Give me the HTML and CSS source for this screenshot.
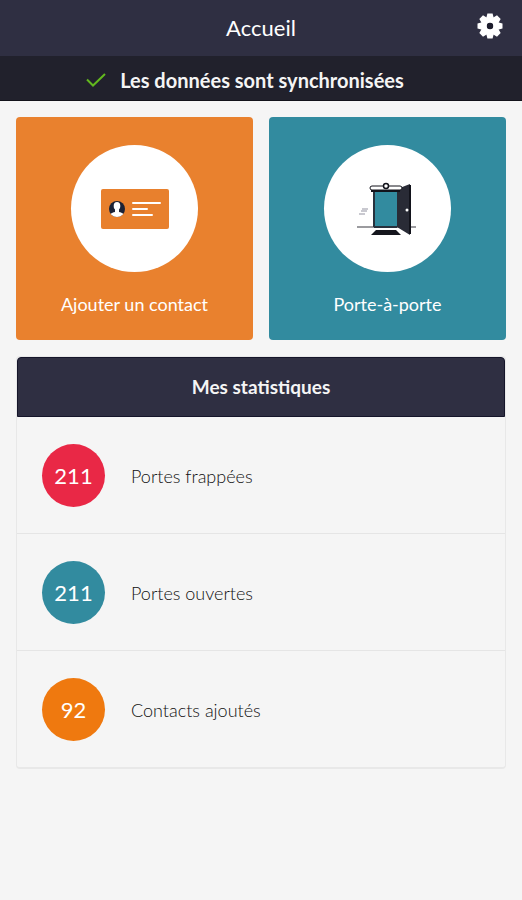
FILE: index.html
```html
<!DOCTYPE html>
<html lang="fr">
<head>
  <meta charset="UTF-8">
  <meta name="viewport" content="width=device-width, initial-scale=1.0">
  <title>Accueil</title>
  <link rel="stylesheet" href="styles.css">
</head>
<body>
  <header class="topbar">
    <h1>Accueil</h1>
    <button class="settings" type="button" aria-label="Paramètres">
      <svg width="26" height="26" viewBox="-13 -13 26 26">
        <g fill="#fff">
          <path id="teeth" d="M-2.6-12.5h5.200L4-7h-8zM-2.6 12.5h5.200L4 7h-8zM-12.5-2.6v5.200L-7 4v-8zM12.5-2.6v5.200L7 4v-8z" />
          <use href="#teeth" transform="rotate(45)" />
        </g>
        <circle r="6" fill="none" stroke="#fff" stroke-width="6" />
        <circle r="3.2" fill="#1c1c2c" />
      </svg>
    </button>
  </header>

  <div class="sync" role="status">
    <svg width="20" height="14" viewBox="0 0 20 14">
      <path d="M1 6.5l6 6L19 1" fill="none" stroke="#62b81e" stroke-width="2" />
    </svg>
    <span>Les données sont synchronisées</span>
  </div>

  <main>
    <nav class="actions">
      <a class="action orange" href="#contact">
        <span class="disc">
          <svg width="68" height="40" viewBox="0 0 68 40">
            <rect width="68" height="40" rx="2" fill="#e8802d" />
            <clipPath id="face"><circle cx="16" cy="20" r="8" /></clipPath>
            <circle cx="16" cy="20" r="8" fill="#1c2235" />
            <g clip-path="url(#face)" fill="#fff">
              <ellipse cx="16" cy="17" rx="3.3" ry="4" />
              <path d="M14 19h4v4c4 1 6 2 6 6H8c0-4 2-5 6-6z" />
            </g>
            <path d="M32 14h27M32 20h14M32 26h19" stroke="#fff" stroke-width="2" stroke-linecap="round" />
          </svg>
        </span>
        Ajouter un contact
      </a>
      <a class="action teal" href="#porte">
        <span class="disc">
          <svg width="68" height="54" viewBox="0 0 68 54">
            <path d="M3 45h59" stroke="#9b9b9f" stroke-width="2" />
            <path d="M8 27h6M7 29h6M5 32h6" stroke="#c9c9d0" stroke-width="2" />
            <path d="M19 8h27v37H19z" fill="#328b9f" />
            <path d="M20 8v37" stroke="#27313d" stroke-width="2" />
            <path d="M20 44h23v2H20z" fill="#27313d" />
            <path d="M43 7l13-5v51l-13-8z" fill="#292b36" />
            <path d="M56 3v49" stroke="#12131b" stroke-width="2" />
            <circle cx="53" cy="28" r="1.5" fill="#fff" />
            <path d="M22 48h20l5 5H17z" fill="#15161d" />
            <path d="M17 9h29" stroke="#12131b" stroke-width="2" />
            <rect x="16" y="4" width="32" height="4" rx="2" fill="#fff" stroke="#12131b" />
            <circle cx="32" cy="4" r="2.5" fill="#fff" stroke="#12131b" stroke-width="1.5" />
          </svg>
        </span>
        Porte-à-porte
      </a>
    </nav>

    <section class="stats">
      <h2>Mes statistiques</h2>
      <ul>
        <li><span class="count red">211</span>Portes frappées</li>
        <li><span class="count teal">211</span>Portes ouvertes</li>
        <li><span class="count amber">92</span>Contacts ajoutés</li>
      </ul>
    </section>
  </main>
</body>
</html>
```

FILE: styles.css
```css
* {
  box-sizing: border-box;
}

body {
  margin: 0;
  min-height: 100vh;
  background: #f5f5f5;
  color: #111;
  font-family: Lato, sans-serif;
  font-size: 18px;
  line-height: 24px;
}

/* Top bar: the empty first column keeps the title centred */
.topbar {
  display: grid;
  grid-template-columns: 48px 1fr 48px;
  align-items: center;
  height: 56px;
  padding: 0 8px;
  background: #2f2f42;
  color: #fff;
}

.topbar h1 {
  grid-column: 2;
  margin: 0;
  font-size: 22px;
  font-weight: 400;
  text-align: center;
}

.settings {
  display: flex;
  justify-content: center;
  padding: 0 0 4px;
  border: none;
  background: none;
  cursor: pointer;
}

.sync {
  display: flex;
  align-items: center;
  justify-content: center;
  gap: 14px;
  height: 45px;
  padding: 3px 32px 0 0;
  border-bottom: 1px solid #12121a;
  background: #21212c;
  color: #f5f5f5;
  font-size: 20px;
  font-weight: 700;
}

main {
  padding: 16px;
}

.actions {
  display: grid;
  grid-template-columns: 1fr 1fr;
  gap: 16px;
}

.action {
  display: flex;
  flex-direction: column;
  align-items: center;
  gap: 20px;
  padding: 28px 8px 24px;
  border-radius: 4px;
  color: #fff;
  text-decoration: none;
}

.disc {
  display: flex;
  align-items: center;
  justify-content: center;
  width: 127px;
  height: 127px;
  border-radius: 50%;
  background: #fff;
}

.orange {
  background: #e9812e;
}

.teal {
  background: #328b9f;
}

.red {
  background: #e92846;
}

.amber {
  background: #ef790f;
}

.stats {
  margin-top: 16px;
  border: 1px solid #e8e8e8;
  border-bottom-width: 2px;
  border-radius: 4px;
}

.stats h2 {
  margin: 0;
  padding: 17px;
  border: 1px solid #15152a;
  border-radius: 4px 4px 0 0;
  background: #2f2f42;
  color: #f5f5f5;
  font-size: 19px;
  font-weight: 700;
  line-height: 24px;
  text-align: center;
}

.stats ul {
  margin: 0;
  padding: 0;
  list-style: none;
}

.stats li {
  display: flex;
  align-items: center;
  gap: 26px;
  padding: 27px 25px 26px;
  font-weight: 300;
}

.stats li + li {
  border-top: 1px solid #e5e5e5;
}

.count {
  display: flex;
  align-items: center;
  justify-content: center;
  width: 63px;
  height: 63px;
  border-radius: 50%;
  color: #fff;
  font-size: 22px;
  font-weight: 400;
}
```
